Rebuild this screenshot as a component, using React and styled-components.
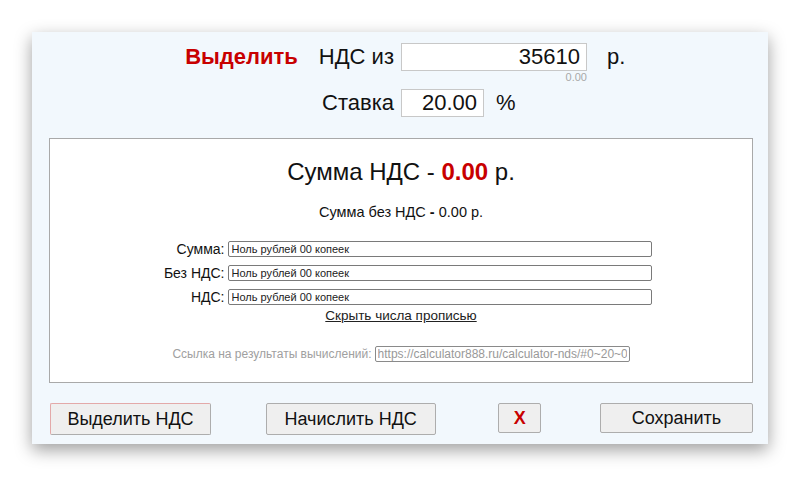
import React from "react";
import styled, { createGlobalStyle } from "styled-components";

const RED = "#c80000";

const GlobalStyle = createGlobalStyle`
  html, body {
    margin: 0;
    padding: 0;
    background: #ffffff;
    font-family: "Liberation Sans", Arial, sans-serif;
    color: #111;
  }
  * { box-sizing: border-box; }
`;

const words = [
  { label: "Сумма:", value: "Ноль рублей 00 копеек" },
  { label: "Без НДС:", value: "Ноль рублей 00 копеек" },
  { label: "НДС:", value: "Ноль рублей 00 копеек" },
];

export default function App() {
  return (
    <>
      <GlobalStyle />
      <Page>
        <Panel>
          <InputRow>
            <Label>
              <Accent>Выделить</Accent>
              НДС из
            </Label>
            <ValueCell $gap={20}>
              <AmountWrap>
                <NumberInput defaultValue="35610" $width={186} />
                <Hint>0.00</Hint>
              </AmountWrap>
              <Suffix>р.</Suffix>
            </ValueCell>
          </InputRow>
          <InputRow $rate>
            <Label>Ставка</Label>
            <ValueCell $gap={12}>
              <NumberInput defaultValue="20.00" $width={83} />
              <Suffix>%</Suffix>
            </ValueCell>
          </InputRow>

          <ResultBox>
            <Title>
              Сумма НДС - <strong>0.00</strong> р.
            </Title>
            <Subtitle>
              Сумма без НДС <b>-</b> 0.00 р.
            </Subtitle>
            <WordsList>
              {words.map((w) => (
                <WordRow key={w.label}>
                  <WordLabel>{w.label}</WordLabel>
                  <WordInput readOnly value={w.value} />
                </WordRow>
              ))}
            </WordsList>
            <ToggleLink href="#">Скрыть числа прописью</ToggleLink>
            <ShareRow>
              <ShareLabel>Ссылка на результаты вычислений:</ShareLabel>
              <ShareInput
                readOnly
                value="https://calculator888.ru/calculator-nds/#0~20~0"
              />
            </ShareRow>
          </ResultBox>

          <ButtonBar>
            <Button $width={161} $height={32} $focused>
              Выделить НДС
            </Button>
            <Button $width={170} $height={32} $shift={-4}>
              Начислить НДС
            </Button>
            <Button $width={43} $height={30} $danger>
              X
            </Button>
            <Button $width={153} $height={30}>
              Сохранить
            </Button>
          </ButtonBar>
        </Panel>
      </Page>
    </>
  );
}

const Page = styled.div`
  width: 800px;
  height: 477px;
  padding: 32px 32px 0;
`;

const Panel = styled.div`
  width: 736px;
  height: 412px;
  background: #f2f8fd;
  box-shadow: 0 6px 16px rgba(0, 0, 0, 0.38);
  padding: 11px 15px 0 17px;
  display: flex;
  flex-direction: column;
`;

const InputRow = styled.div`
  display: grid;
  grid-template-columns: 1fr 1fr;
  align-items: start;
  margin-top: ${(p) => (p.$rate ? "5px" : "0")};
`;

const Label = styled.div`
  display: flex;
  justify-content: flex-end;
  align-items: center;
  gap: 21px;
  height: 28px;
  padding-right: 7px;
  font-size: 22px;
  color: #111;
`;

const Accent = styled.span`
  color: ${RED};
  font-weight: bold;
  font-size: 22px;
`;

const ValueCell = styled.div`
  display: flex;
  align-items: flex-start;
  gap: ${(p) => p.$gap}px;
`;

const AmountWrap = styled.div`
  display: flex;
  flex-direction: column;
  align-items: flex-end;
`;

const NumberInput = styled.input`
  width: ${(p) => p.$width}px;
  height: 28px;
  border: 1px solid #c8c8c8;
  background: #fff;
  padding: 0 6px 0 4px;
  text-align: right;
  font-family: "Liberation Sans", Arial, sans-serif;
  font-size: 22px;
  color: #111;
  outline: none;
`;

const Hint = styled.div`
  height: 13px;
  line-height: 13px;
  font-size: 11px;
  color: #a8a8a8;
`;

const Suffix = styled.span`
  height: 28px;
  line-height: 28px;
  font-size: 22px;
`;

const ResultBox = styled.div`
  margin-top: 21px;
  height: 245px;
  background: #fff;
  border: 1px solid #a9a9a9;
  display: flex;
  flex-direction: column;
  align-items: center;
  padding-top: 19px;
`;

const Title = styled.div`
  font-size: 24px;
  line-height: 28px;

  strong {
    color: ${RED};
  }
`;

const Subtitle = styled.div`
  margin-top: 17px;
  font-size: 14.5px;
  line-height: 18px;
`;

const WordsList = styled.div`
  margin-top: 20px;
  display: flex;
  flex-direction: column;
  gap: 8px;
`;

const WordRow = styled.div`
  display: flex;
  align-items: center;
  gap: 3px;
`;

const WordLabel = styled.span`
  width: 74px;
  text-align: right;
  font-size: 14px;
  line-height: 16px;
`;

const WordInput = styled.input`
  width: 424px;
  height: 16px;
  border: 1px solid #7a7a7a;
  border-radius: 2px;
  padding: 0 3px;
  font-family: "Liberation Sans", Arial, sans-serif;
  font-size: 11px;
  color: #222;
  outline: none;
`;

const ToggleLink = styled.a`
  margin-top: 3px;
  font-size: 13.5px;
  line-height: 16px;
  color: #222;
  text-decoration: underline;
`;

const ShareRow = styled.div`
  margin-top: 22px;
  display: flex;
  align-items: center;
  gap: 3px;
`;

const ShareLabel = styled.span`
  font-size: 12px;
  color: #a0a0a0;
`;

const ShareInput = styled.input`
  width: 255px;
  height: 16px;
  border: 1px solid #8a8a8a;
  border-radius: 2px;
  padding: 0 2px;
  font-family: "Liberation Sans", Arial, sans-serif;
  font-size: 12px;
  color: #999;
  outline: none;
`;

const ButtonBar = styled.div`
  margin-top: 20px;
  display: flex;
  justify-content: space-between;
  align-items: flex-start;
  padding-left: 1px;
`;

const Button = styled.button`
  position: relative;
  left: ${(p) => p.$shift || 0}px;
  width: ${(p) => p.$width}px;
  height: ${(p) => p.$height}px;
  background: #efefef;
  border: 1px solid #adadad;
  border-color: ${(p) =>
    p.$focused ? "#e3a9a9 #adadad #adadad #e3a9a9" : "#adadad"};
  border-radius: 2px;
  font-family: "Liberation Sans", Arial, sans-serif;
  font-size: 18px;
  font-weight: ${(p) => (p.$danger ? "bold" : "normal")};
  color: ${(p) => (p.$danger ? RED : "#111")};
  padding: 0;
  cursor: pointer;
`;
